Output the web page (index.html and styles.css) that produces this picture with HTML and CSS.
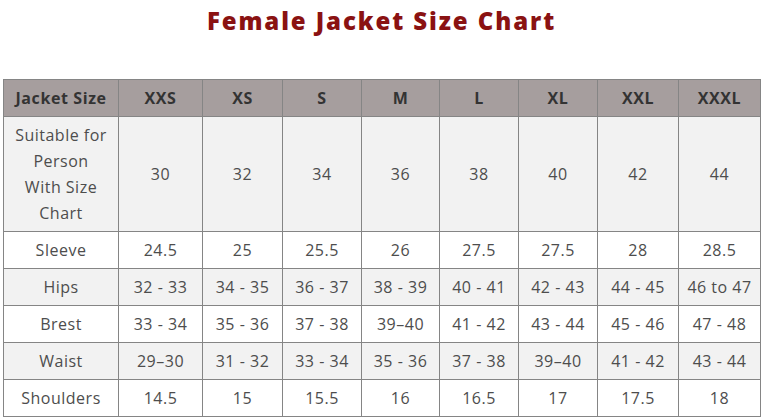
FILE: index.html
```html
<!DOCTYPE html>
<html lang="en">
<head>
<meta charset="utf-8">
<title>Female Jacket Size Chart</title>
<link rel="stylesheet" href="styles.css">
</head>
<body>
<main class="page">
  <h1 class="title">Female Jacket Size Chart</h1>
  <table class="chart">
    <colgroup>
      <col class="c-label">
      <col class="c-xxs">
      <col class="c-xs">
      <col class="c-s">
      <col class="c-m">
      <col class="c-l">
      <col class="c-xl">
      <col class="c-xxl">
      <col class="c-xxxl">
    </colgroup>
    <thead>
      <tr class="head">
        <th>Jacket Size</th><th>XXS</th><th>XS</th><th>S</th><th>M</th><th>L</th><th>XL</th><th>XXL</th><th>XXXL</th>
      </tr>
    </thead>
    <tbody>
      <tr class="alt tall">
        <td class="label">Suitable for Person With Size Chart</td><td>30</td><td>32</td><td>34</td><td>36</td><td>38</td><td>40</td><td>42</td><td>44</td>
      </tr>
      <tr>
        <td class="label">Sleeve</td><td>24.5</td><td>25</td><td>25.5</td><td>26</td><td>27.5</td><td>27.5</td><td>28</td><td>28.5</td>
      </tr>
      <tr class="alt">
        <td class="label">Hips</td><td>32 - 33</td><td>34 - 35</td><td>36 - 37</td><td>38 - 39</td><td>40 - 41</td><td>42 - 43</td><td>44 - 45</td><td>46 to 47</td>
      </tr>
      <tr>
        <td class="label">Brest</td><td>33 - 34</td><td>35 - 36</td><td>37 - 38</td><td>39–40</td><td>41 - 42</td><td>43 - 44</td><td>45 - 46</td><td>47 - 48</td>
      </tr>
      <tr class="alt">
        <td class="label">Waist</td><td>29–30</td><td>31 - 32</td><td>33 - 34</td><td>35 - 36</td><td>37 - 38</td><td>39–40</td><td>41 - 42</td><td>43 - 44</td>
      </tr>
      <tr>
        <td class="label">Shoulders</td><td>14.5</td><td>15</td><td>15.5</td><td>16</td><td>16.5</td><td>17</td><td>17.5</td><td>18</td>
      </tr>
    </tbody>
  </table>
</main>
</body>
</html>
```
FILE: styles.css
```css
* { box-sizing: border-box; }
html, body { margin: 0; padding: 0; background: #ffffff; }
body { font-family: "Open Sans", "DejaVu Sans", sans-serif; }
.page { width: 763px; padding: 6px 3px 0 3px; }
.title {
  margin: 0 0 43px 0;
  text-align: center;
  font-size: 24px;
  line-height: 30px;
  font-weight: 800;
  letter-spacing: 1.9px;
  color: #8a1212;
}
.chart {
  border-collapse: collapse;
  table-layout: fixed;
  width: 757px;
  color: #4d4d4d;
  font-size: 16px;
  letter-spacing: 0.5px;
}
.c-label { width: 115px; }
.c-xxs { width: 84px; }
.c-xs { width: 80px; }
.c-s { width: 79px; }
.c-m { width: 78px; }
.c-l { width: 79px; }
.c-xl { width: 79px; }
.c-xxl { width: 81px; }
.c-xxxl { width: 82px; }
.chart th, .chart td {
  border: 1px solid #858585;
  text-align: center;
  vertical-align: middle;
  height: 37px;
  padding: 0 4px;
  line-height: 26px;
}
.chart .label { padding: 0 9px; }
.chart th {
  background: #a69e9e;
  color: #333333;
  font-weight: 700;
  font-size: 16px;
  letter-spacing: 0.6px;
  white-space: nowrap;
}
.chart tr.alt td { background: #f2f2f2; }
.chart tr.tall td { height: 115px; }
```
